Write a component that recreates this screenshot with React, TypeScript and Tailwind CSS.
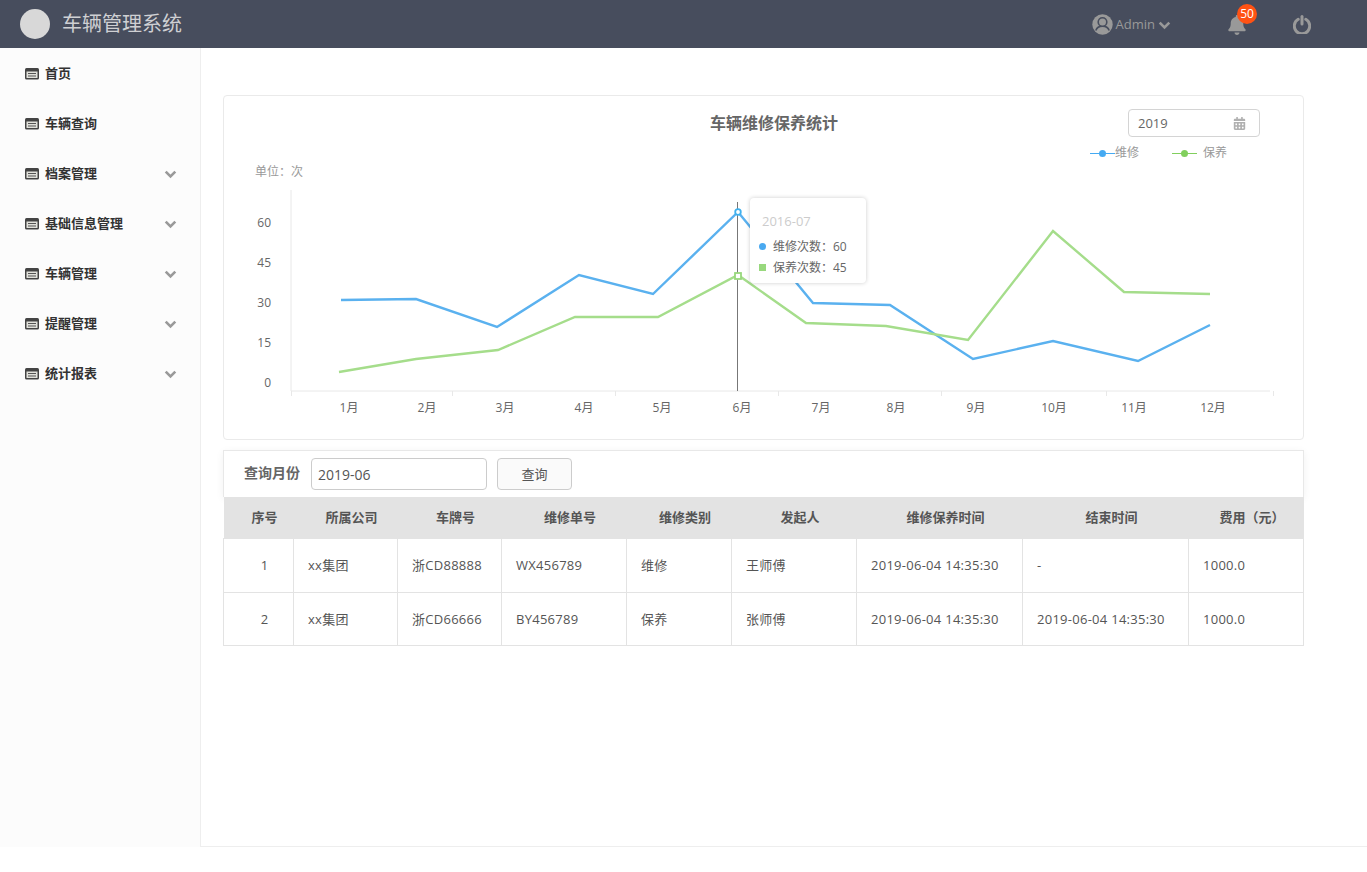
import { FaCalendarAlt, FaBell } from "react-icons/fa";

const font = "font-['Open_Sans','Noto_Sans_CJK_SC',sans-serif]";

const menus = [
  { name: "首页", sub: false },
  { name: "车辆查询", sub: false },
  { name: "档案管理", sub: true },
  { name: "基础信息管理", sub: true },
  { name: "车辆管理", sub: true },
  { name: "提醒管理", sub: true },
  { name: "统计报表", sub: true },
];

const blue = [[341, 300], [416, 299], [497, 327], [579, 275], [653, 294], [738, 212], [813, 303], [890, 305], [973, 359], [1053, 341], [1138, 361], [1210, 325]];
const green = [[339, 372], [416, 359], [498, 350], [575, 317], [658, 317], [738, 275], [806, 323], [886, 326], [968, 340], [1053, 231], [1124, 292], [1210, 294]];
const months = [[349, "1月"], [427, "2月"], [505, "3月"], [584, "4月"], [662, "5月"], [742, "6月"], [821, "7月"], [896, "8月"], [976, "9月"], [1054, "10月"], [1134, "11月"], [1213, "12月"]] as const;
const yTicks = [[60, 227], [45, 267], [30, 307], [15, 347], [0, 387]];
const xTicks = [291, 452, 615, 778, 941, 1106, 1273];

const columns = [
  { title: "序号", width: 70 },
  { title: "所属公司", width: 104 },
  { title: "车牌号", width: 104 },
  { title: "维修单号", width: 125 },
  { title: "维修类别", width: 105 },
  { title: "发起人", width: 125 },
  { title: "维修保养时间", width: 166 },
  { title: "结束时间", width: 166 },
  { title: "费用（元）", width: 115 },
];

const rows = [
  ["1", "xx集团", "浙CD88888", "WX456789", "维修", "王师傅", "2019-06-04 14:35:30", "-", "1000.0"],
  ["2", "xx集团", "浙CD66666", "BY456789", "保养", "张师傅", "2019-06-04 14:35:30", "2019-06-04 14:35:30", "1000.0"],
];

const toPoints = (list: number[][]) => list.map((p) => p.join(",")).join(" ");

const MenuIcon = () => (
  <svg width="14" height="12" viewBox="0 0 14 12" className="shrink-0">
    <rect x="0" y="0" width="14" height="11.5" rx="1.5" fill="#444" />
    <rect x="1.5" y="3.5" width="11" height="6.5" fill="#e2e2dc" />
    <path d="M3 5.5h8M3 8h8" stroke="#555" strokeWidth="1" />
  </svg>
);

const Chevron = ({ className }: { className: string }) => (
  <svg width="13" height="9" viewBox="0 0 13 9" className={className}>
    <path d="M1.7 1.7 6.5 6.5 11.3 1.7" fill="none" stroke="currentColor" strokeWidth="2.6" />
  </svg>
);

const UserIcon = () => (
  <svg width="21" height="21" viewBox="0 0 21 21">
    <circle cx="10.5" cy="10.5" r="10.2" fill="#999" />
    <path d="M3.8 16.5c1-3 3.4-4.4 6.7-4.4s5.7 1.4 6.7 4.4" fill="#999" stroke="#474d5d" strokeWidth="1.6" />
    <circle cx="10.5" cy="8" r="4.3" fill="#999" stroke="#474d5d" strokeWidth="1.6" />
  </svg>
);

const PowerIcon = () => (
  <svg width="18" height="19" viewBox="0 0 18 19">
    <path d="M5.2 4.3a7.7 7.7 0 1 0 7.6 0" fill="none" stroke="currentColor" strokeWidth="3" strokeLinecap="round" />
    <path d="M9 1.5v7.5" fill="none" stroke="currentColor" strokeWidth="3" strokeLinecap="round" />
  </svg>
);

const LegendItem = ({ color, label, gap }: { color: string; label: string; gap: string }) => (
  <div className={`flex items-center ${gap}`}>
    <div className="relative h-[1px] w-[25px]" style={{ backgroundColor: color }}>
      <div className="absolute left-[9px] top-[-3px] h-[7px] w-[7px] rounded-full" style={{ backgroundColor: color }} />
    </div>
    <span className="text-xs text-[#999]">{label}</span>
  </div>
);

const Chart = () => (
  <svg viewBox="224 180 1079 240" className="block h-[240px] w-[1079px]">
    <path d="M291 190V391H1270" fill="none" stroke="#e8e8e8" />
    {xTicks.map((x) => (
      <path key={x} d={`M${x + 0.5} 391v5`} stroke="#e8e8e8" />
    ))}
    {yTicks.map(([label, y]) => (
      <text key={label} x="271" y={y} textAnchor="end" fontSize="12" fill="#666">
        {label}
      </text>
    ))}
    {months.map(([x, label]) => (
      <text key={label} x={x} y="412" textAnchor="middle" fontSize="12" fill="#666">
        {label}
      </text>
    ))}
    <polyline points={toPoints(blue)} fill="none" stroke="#5ab1ef" strokeWidth="2.4" />
    <polyline points={toPoints(green)} fill="none" stroke="#a5dd8b" strokeWidth="2.4" />
    <path d="M737.5 202V391" stroke="#777" />
    <circle cx="738" cy="212" r="2.8" fill="#fff" stroke="#3fb1ee" strokeWidth="1.8" />
    <rect x="735" y="273" width="6" height="6" fill="#fff" stroke="#98d87d" strokeWidth="1.8" />
  </svg>
);

export default function App() {
  return (
    <div className={`${font} min-h-[872px] bg-white`}>
      <header className="flex h-12 items-center bg-[#474d5d]">
        <div className="ml-5 h-[30px] w-[30px] rounded-full bg-[#d8d8d8]" />
        <h1 className="ml-3 text-xl font-normal text-[#cfd0d3]">车辆管理系统</h1>
        <div className="ml-auto flex items-center text-[#999]">
          <UserIcon />
          <span className="ml-[3px] mt-[1px] text-[13px]">Admin</span>
          <Chevron className="ml-[3px] mt-[2px]" />
          <div className="relative ml-[56px] mt-[1px]">
            <FaBell className="text-[20px]" />
            <span className="absolute left-[10px] top-[-11px] flex h-5 w-5 items-center justify-center rounded-full bg-[#ff5214] text-xs text-white">
              50
            </span>
          </div>
          <div className="ml-[46px] mr-[56px] mt-[1px]">
            <PowerIcon />
          </div>
        </div>
      </header>

      <div className="flex h-[799px]">
        <aside className="w-[201px] shrink-0 border-r border-[#eee] bg-[#fcfcfc]">
          {menus.map((m) => (
            <div key={m.name} className="flex h-[50px] items-center pl-[25px] pr-[23px] pt-[2px]">
              <MenuIcon />
              <span className="ml-[6px] text-[13px] font-bold text-[#333]">{m.name}</span>
              {m.sub && <Chevron className="ml-auto text-[#999]" />}
            </div>
          ))}
        </aside>

        <main className="flex-1 border-b border-[#eee] pl-[22px] pt-[47px]">
          <section className="relative h-[345px] w-[1081px] rounded border border-[#eaeaea]">
            <div className="flex h-[56px] items-start">
              <h2 className="ml-[486px] mt-[15px] text-base font-bold text-[#666]">车辆维修保养统计</h2>
              <div className="ml-auto mr-[43px] mt-[13px] flex h-7 w-[132px] items-center justify-between rounded border border-[#d4d4d4] pl-[9px] pr-[13px] pt-[1px]">
                <span className="text-[13px] text-[#666]">2019</span>
                <FaCalendarAlt className="text-[13px] text-[#b0b0b0]" />
              </div>
            </div>
            <div className="absolute right-[76px] top-[49px] flex">
              <LegendItem color="#45aaf2" label="维修" gap="gap-0" />
              <div className="w-[33px]" />
              <LegendItem color="#81cf5d" label="保养" gap="gap-[6px]" />
            </div>
            <div className="ml-[31px] mt-[11px] h-[17px] text-xs leading-[17px] text-[#999]">单位：次</div>
            <div>
              <Chart />
            </div>
            <div className="absolute left-[526px] top-[102px] h-[85px] w-[116px] rounded bg-white px-[9px] shadow-[0_0_4px_rgba(0,0,0,0.2)]">
              <div className="ml-[3px] mt-[14px] text-[13px] leading-[18px] text-[#ccc]">2016-07</div>
              <div className="mt-[6px] flex h-[21px] items-center text-xs text-[#666]">
                <span className="h-[7px] w-[7px] rounded-full bg-[#4aa9f0]" />
                <span className="ml-[7px]">维修次数：60</span>
              </div>
              <div className="flex h-[21px] items-center text-xs text-[#666]">
                <span className="h-[7px] w-[7px] bg-[#98d87d]" />
                <span className="ml-[7px]">保养次数：45</span>
              </div>
            </div>
          </section>

          <section className="mt-[10px] w-[1081px]">
            <div className="flex h-[47px] items-center border border-b-0 border-[#e8e8e8] bg-white pl-5 shadow-[0_2px_8px_rgba(0,0,0,0.06)]">
              <span className="mb-[2px] text-sm font-bold text-[#666]">查询月份</span>
              <div className="ml-[11px] flex h-8 w-[176px] items-center rounded-sm border border-[#ccc] px-[6px] pt-[1px] text-sm text-[#555]">
                2019-06
              </div>
              <button className="ml-[10px] h-8 w-[75px] rounded-sm border border-[#ccc] bg-[#fafafa] pt-[1px] text-[13px] text-[#555]">
                查询
              </button>
            </div>
            <table className="w-[1081px] table-fixed border-collapse text-[13px] tracking-[0.27px] text-[#555]">
              <colgroup>
                {columns.map((c) => (
                  <col key={c.title} style={{ width: c.width }} />
                ))}
              </colgroup>
              <thead>
                <tr className="h-[41px] bg-[#e3e3e3] text-[#555]">
                  {columns.map((c) => (
                    <th key={c.title} className="pl-3 text-center text-[13px] font-bold tracking-normal">
                      {c.title}
                    </th>
                  ))}
                </tr>
              </thead>
              <tbody>
                {rows.map((row, r) => (
                  <tr key={row[0]} className={r === 0 ? "h-[54px]" : "h-[53px]"}>
                    {row.map((cell, i) => (
                      <td key={i} className={`border border-[#e3e3e3] pt-[2px] ${i === 0 ? "pl-3 text-center" : "pl-[14px]"}`}>
                        {cell}
                      </td>
                    ))}
                  </tr>
                ))}
              </tbody>
            </table>
          </section>
        </main>
      </div>
    </div>
  );
}
